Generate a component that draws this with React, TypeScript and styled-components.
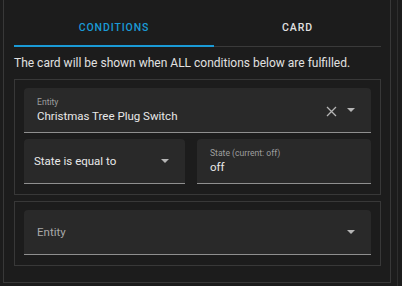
import styled, { createGlobalStyle } from "styled-components";

const GlobalStyle = createGlobalStyle`
  html, body {
    margin: 0;
    padding: 0;
    background: #1c1c1c;
  }
  body {
    font-family: Roboto, "Noto Sans", "Liberation Sans", sans-serif;
    color: #e1e1e1;
  }
`;

function ArrowDown() {
  return (
    <svg width="8" height="4" viewBox="0 0 8 4">
      <path d="M0 0 L8 0 L4 4 Z" fill="#b5b5b5" />
    </svg>
  );
}

function ClearIcon() {
  return (
    <svg width="11" height="11" viewBox="0 0 11 11">
      <path d="M1 1 L10 10 M10 1 L1 10" stroke="#b5b5b5" strokeWidth="1.3" />
    </svg>
  );
}

export default function App() {
  return (
    <>
      <GlobalStyle />
      <Page>
        <Panel>
          <Tabs>
            <Tab $active $width={200}>Conditions</Tab>
            <Tab $width={167}>Card</Tab>
          </Tabs>
          <Description>
            The card will be shown when ALL conditions below are fulfilled.
          </Description>
          <Conditions>
            <ConditionBox>
              <Field>
                <FieldText>
                  <Label>Entity</Label>
                  <Value>Christmas Tree Plug Switch</Value>
                </FieldText>
                <Icons>
                  <ClearWrap>
                    <ClearIcon />
                  </ClearWrap>
                  <ArrowDown />
                </Icons>
              </Field>
              <Row>
                <Field $compact>
                  <Value>State is equal to</Value>
                  <Icons>
                    <ArrowDown />
                  </Icons>
                </Field>
                <Field>
                  <FieldText>
                    <Label>State (current: off)</Label>
                    <Value>off</Value>
                  </FieldText>
                </Field>
              </Row>
            </ConditionBox>
            <ConditionBox>
              <Field $centered>
                <Placeholder>Entity</Placeholder>
                <Icons>
                  <ArrowDown />
                </Icons>
              </Field>
            </ConditionBox>
          </Conditions>
        </Panel>
        <ScrollTrack />
      </Page>
    </>
  );
}

const Page = styled.div`
  width: 402px;
  height: 286px;
  overflow: hidden;
  display: flex;
  align-items: flex-start;
`;

const Panel = styled.div`
  margin-left: 3px;
  width: 388px;
  box-sizing: border-box;
  border: 1px solid #383838;
  border-top: none;
  padding: 0 9px 16px 10px;
  display: flex;
  flex-direction: column;
`;

const ScrollTrack = styled.div`
  margin-left: 6px;
  width: 5px;
  height: 286px;
  border-left: 1px solid #2e2e2e;
`;

const Tabs = styled.div`
  display: flex;
  height: 46px;
  border-bottom: 1px solid #3a3a3a;
`;

const Tab = styled.div<{ $active?: boolean; $width: number }>`
  width: ${(p) => p.$width}px;
  display: flex;
  align-items: center;
  justify-content: center;
  padding-top: 9px;
  box-sizing: border-box;
  font-size: 10.5px;
  font-weight: 500;
  letter-spacing: 0.9px;
  text-transform: uppercase;
  color: ${(p) => (p.$active ? "#1a9ad6" : "#e1e1e1")};
  border-bottom: 2px solid ${(p) => (p.$active ? "#1a9ad6" : "transparent")};
  margin-bottom: -1px;
`;

const Description = styled.p`
  margin: 8px 0 8px;
  font-size: 12px;
  line-height: 16px;
  color: #e1e1e1;
`;

const Conditions = styled.div`
  display: flex;
  flex-direction: column;
  gap: 6px;
`;

const ConditionBox = styled.div`
  border: 1px solid #383838;
  padding: 8px 9px 10px;
  display: flex;
  flex-direction: column;
  gap: 6px;
`;

const Row = styled.div`
  display: grid;
  grid-template-columns: 161px 1fr;
  gap: 12px;
`;

const Field = styled.div<{ $compact?: boolean; $centered?: boolean }>`
  height: 45px;
  box-sizing: border-box;
  background: #292929;
  border-radius: 4px 4px 0 0;
  border-bottom: 1px solid #8f8f8f;
  display: flex;
  align-items: ${(p) => (p.$compact || p.$centered ? "center" : "flex-start")};
  padding: 0 ${(p) => (p.$compact ? "16px 0 10px" : "16px 0 13px")};
`;

const FieldText = styled.div`
  flex: 1;
  padding-top: 8px;
  display: flex;
  flex-direction: column;
`;

const Label = styled.span`
  font-size: 8.6px;
  line-height: 12px;
  color: #9e9e9e;
`;

const Value = styled.span`
  flex: 1;
  font-size: 11.5px;
  line-height: 16px;
  color: #e8e8e8;
`;

const Placeholder = styled.span`
  flex: 1;
  font-size: 11.5px;
  color: #a8a8a8;
`;

const Icons = styled.div`
  display: flex;
  align-items: center;
  gap: 10px;
  align-self: center;
`;

const ClearWrap = styled.span`
  display: flex;
  margin-top: 3px;
`;
